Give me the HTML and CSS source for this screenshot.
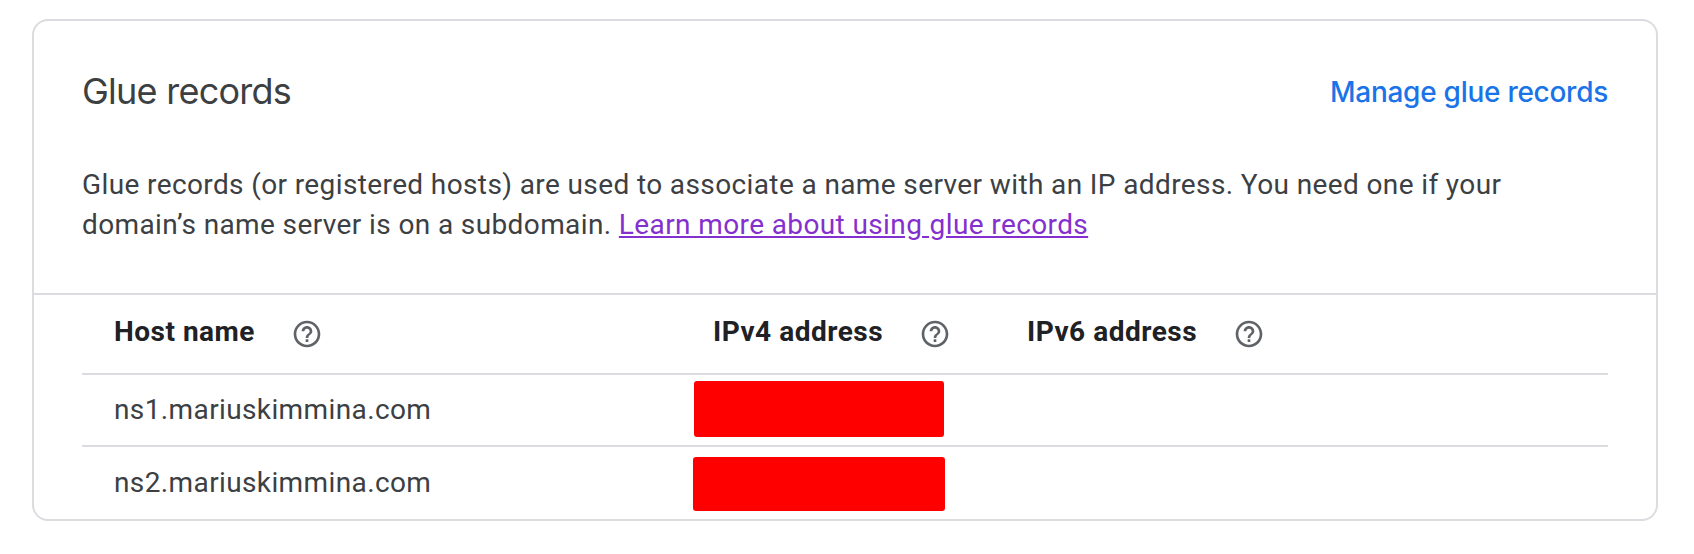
FILE: index.html
```html
<!DOCTYPE html>
<html lang="en">
<head>
<meta charset="utf-8">
<title>Glue records</title>
<link rel="stylesheet" href="styles.css">
</head>
<body>
<svg class="sprite" aria-hidden="true">
  <symbol id="help" viewBox="0 0 24 24">
    <path d="M11 18h2v-2h-2v2zm1-16C6.48 2 2 6.48 2 12s4.480 10 10 10 10-4.480 10-10S17.520 2 12 2zm0 18c-4.410 0-8-3.590-8-8s3.590-8 8-8 8 3.590 8 8-3.590 8-8 8zm0-14c-2.210 0-4 1.790-4 4h2c0-1.100.9-2 2-2s2 .9 2 2c0 2-3 1.750-3 5h2c0-2.250 3-2.500 3-5 0-2.210-1.790-4-4-4z"/>
  </symbol>
</svg>
<section class="card">
  <header class="card-header">
    <h2 class="title">Glue records</h2>
    <a class="manage">Manage glue records</a>
  </header>
  <p class="description">Glue records (or registered hosts) are used to associate a name server with an IP address. You need one if your domain’s name server is on a subdomain. <a class="learn">Learn more about using glue records</a></p>
  <div class="table">
    <div class="row head">
      <div class="cell"><span class="label">Host name</span><svg class="help"><use href="#help"/></svg></div>
      <div class="cell"><span class="label">IPv4 address</span><svg class="help"><use href="#help"/></svg></div>
      <div class="cell"><span class="label">IPv6 address</span><svg class="help"><use href="#help"/></svg></div>
    </div>
    <div class="row first">
      <div class="cell">ns1.mariuskimmina.com</div>
      <div class="redacted"></div>
    </div>
    <div class="row second">
      <div class="cell">ns2.mariuskimmina.com</div>
      <div class="redacted"></div>
    </div>
  </div>
</section>
</body>
</html>
```
FILE: styles.css
```css
* { box-sizing: border-box; }

body {
  margin: 0;
  padding: 19px 36px 0 32px;
  background: #fff;
  color: #3c4043;
  font-family: Roboto, sans-serif;
  font-size: 28px;
  letter-spacing: 0.385px;
}

.sprite { display: none; }

.card {
  height: 502px;
  border: 2px solid #dadce0;
  border-radius: 16px;
}

.card-header {
  display: flex;
  justify-content: space-between;
  align-items: center;
  height: 142px;
  padding: 0 48px;
}

.title {
  margin: 0;
  padding-bottom: 2px;
  font-family: Inter, sans-serif;
  font-size: 36px;
  font-weight: 400;
  line-height: 48px;
  letter-spacing: -0.75px;
}

.manage {
  font-family: Inter, sans-serif;
  font-size: 28px;
  font-weight: 500;
  line-height: 40px;
  letter-spacing: -0.27px;
  color: #1a73e8;
}

.description {
  height: 130px;
  margin: 0;
  padding: 2px 48px 0;
  line-height: 40px;
}

.learn {
  color: #8430ce;
  text-decoration: underline;
}

.table {
  padding: 0 48px;
  border-top: 2px solid #dadce0;
}

.row {
  display: grid;
  grid-template-columns: 599px 314px 1fr;
  border-bottom: 2px solid #dadce0;
}

.cell {
  display: flex;
  align-items: center;
  padding: 0 0 2px 32px;
}

.head {
  height: 80px;
  font-weight: 700;
  letter-spacing: 0.5px;
  color: #202124;
}

.head .cell { padding-bottom: 0; }

.label { padding-bottom: 5px; }

.help {
  width: 32px;
  height: 32px;
  margin-left: 36px;
  fill: #5f6368;
}

.first { height: 72px; }

.second {
  height: 72px;
  border-bottom: 0;
}

.redacted {
  border-radius: 3px;
  background: #f00;
}

.first .redacted {
  width: 250px;
  height: 56px;
  margin: 6px 0 0 13px;
}

.second .redacted {
  width: 252px;
  height: 54px;
  margin: 10px 0 0 12px;
}
```
